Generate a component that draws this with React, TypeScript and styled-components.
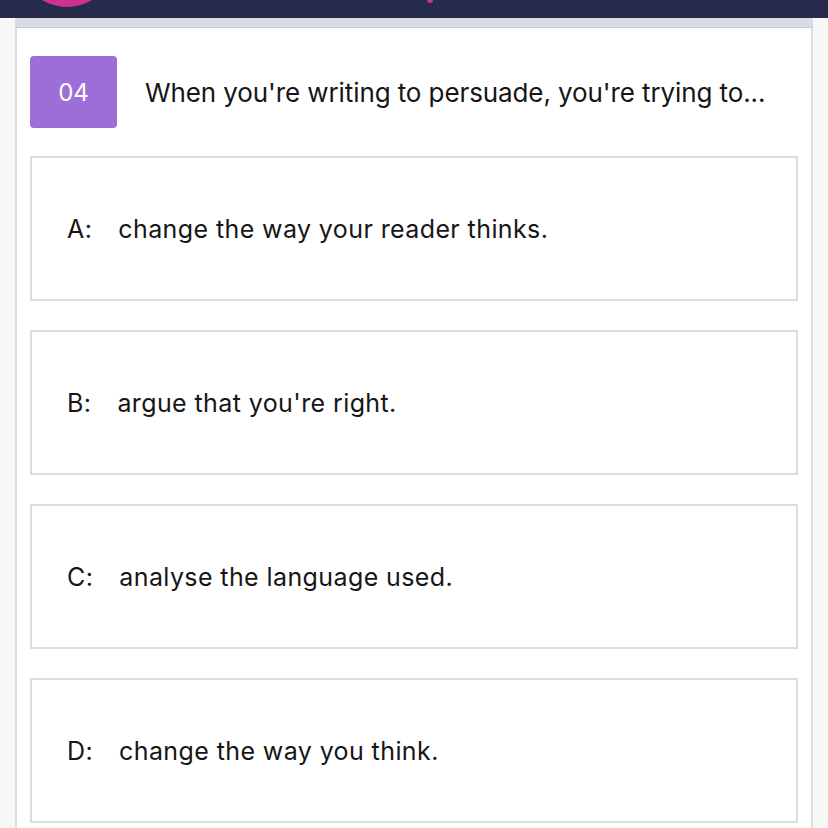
import React from 'react';
import styled, {createGlobalStyle} from 'styled-components';

const GlobalStyle = createGlobalStyle`
  html, body {
    margin: 0;
    padding: 0;
    background: #f7f7f8;
    font-family: Inter, "Noto Sans", sans-serif;
    color: #161616;
    overflow: hidden;
  }
`;

const options = [
  {letter: 'A', text: 'change the way your reader thinks.'},
  {letter: 'B', text: "argue that you're right."},
  {letter: 'C', text: 'analyse the language used.'},
  {letter: 'D', text: 'change the way you think.'},
];

export default function App(): JSX.Element {
  return (
    <>
      <GlobalStyle />
      <TopBar>
        <Avatar />
        <TitleTail />
      </TopBar>
      <Page>
        <SubBar />
        <Card>
          <QuestionRow>
            <Badge>04</Badge>
            <Question>When you're writing to persuade, you're trying to...</Question>
          </QuestionRow>
          <OptionList>
            {options.map(o => (
              <Option key={o.letter}>
                <Letter>{o.letter}:</Letter>
                <OptionText>{o.text}</OptionText>
              </Option>
            ))}
          </OptionList>
        </Card>
      </Page>
    </>
  );
}

const TopBar = styled.header`
  position: relative;
  height: 18px;
  background: #262a4b;
  overflow: hidden;
`;
const Avatar = styled.div`
  position: absolute;
  left: 19px;
  top: -89px;
  width: 96px;
  height: 96px;
  border-radius: 50%;
  background: #d0308f;
`;
const TitleTail = styled.div`
  position: absolute;
  left: 427px;
  top: -3px;
  width: 6px;
  height: 6px;
  border-radius: 50%;
  background: #c23a93;
`;
const Page = styled.main`
  margin: 0 15px;
`;
const SubBar = styled.div`
  height: 9px;
  background: #d9dce7;
  border-bottom: 1px solid #c9ccd8;
`;
const Card = styled.section`
  background: #fff;
  border-left: 2px solid #dedede;
  border-right: 2px solid #dedede;
  padding: 28px 13px 20px 13px;
  min-height: 900px;
`;
const QuestionRow = styled.div`
  display: flex;
  align-items: center;
  gap: 28px;
`;
const Badge = styled.div`
  width: 87px;
  height: 72px;
  flex: none;
  display: flex;
  align-items: center;
  justify-content: center;
  background: #9d6ed8;
  border-radius: 4px;
  color: #fff;
  font-size: 24px;
`;
const Question = styled.h1`
  margin: 0;
  font-size: 26px;
  font-weight: 400;
  letter-spacing: -0.1px;
`;
const OptionList = styled.div`
  display: flex;
  flex-direction: column;
  gap: 29px;
  margin-top: 28px;
`;
const Option = styled.div`
  height: 145px;
  box-sizing: border-box;
  border: 2px solid #dcdcdc;
  display: flex;
  align-items: center;
  padding-left: 35px;
  font-size: 25px;
  letter-spacing: 0.4px;
`;
const Letter = styled.span`
  flex: none;
  margin-right: 26px;
`;
const OptionText = styled.span``;
